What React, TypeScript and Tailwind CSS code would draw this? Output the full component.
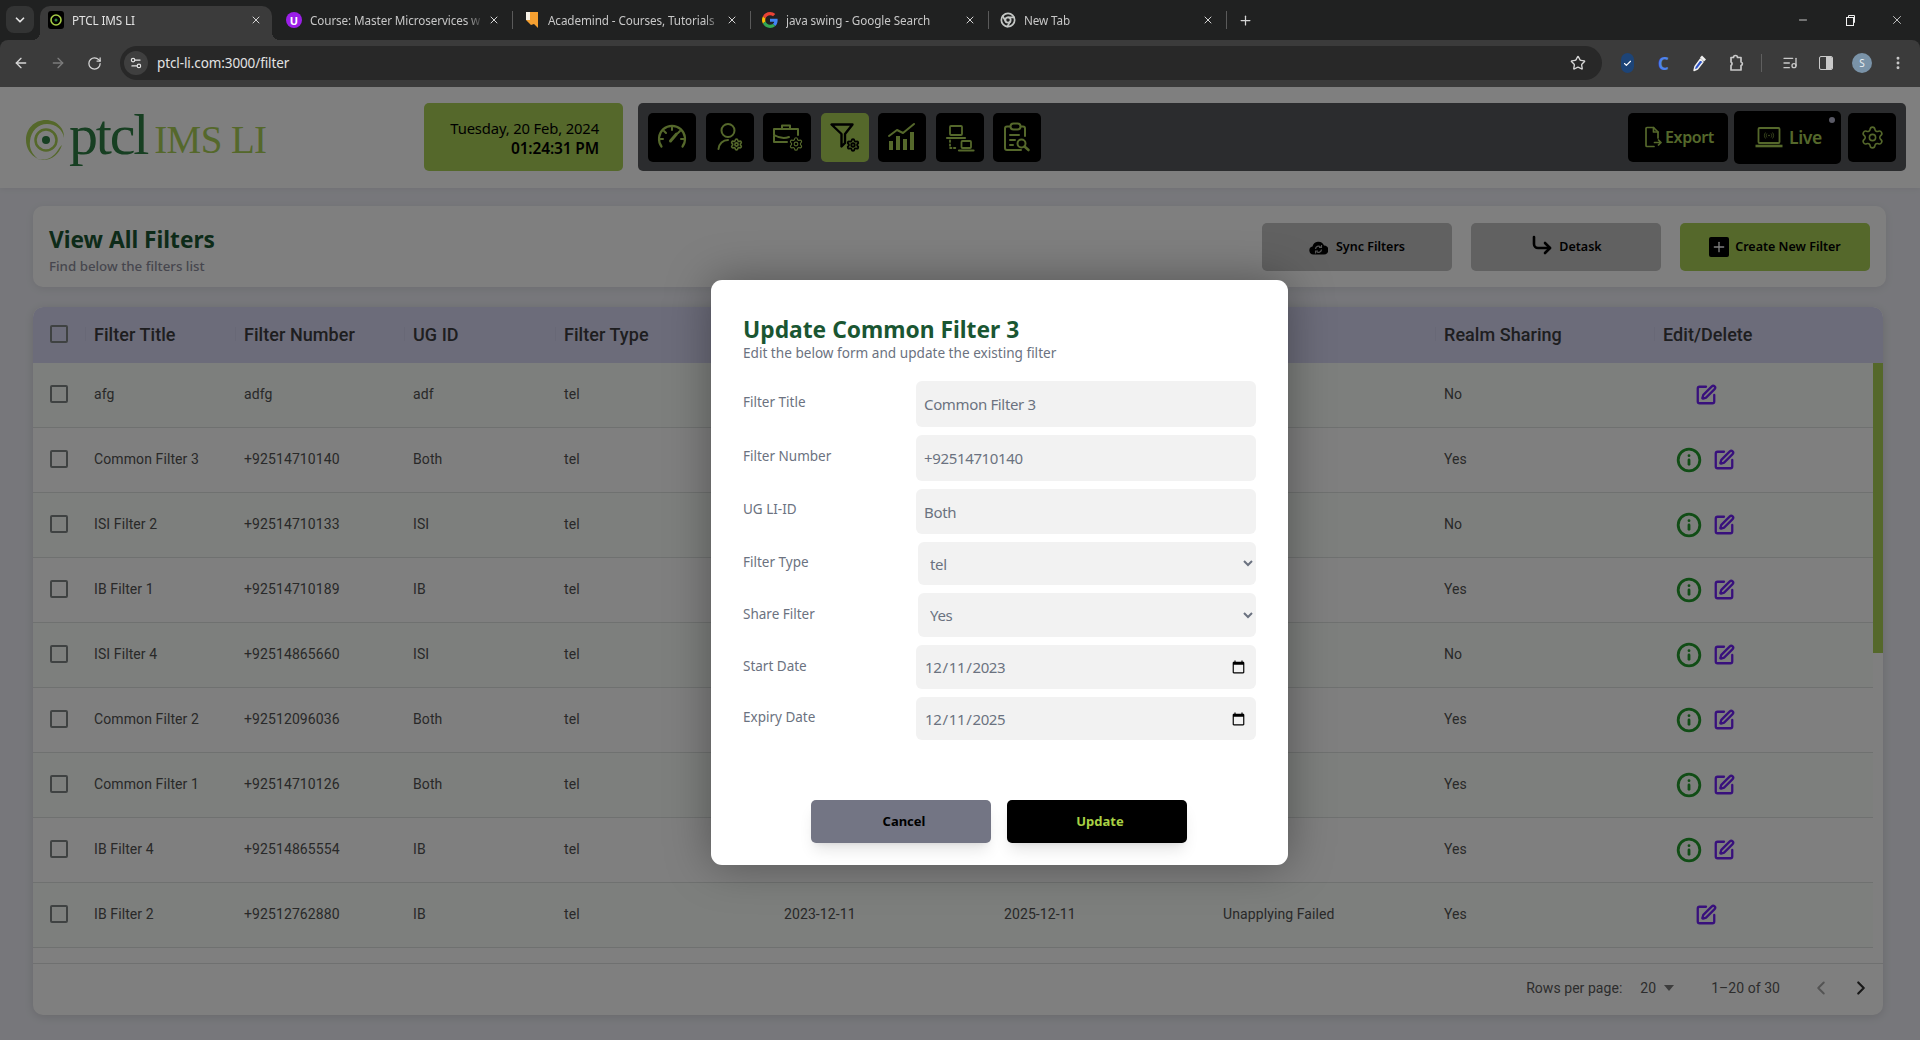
import React from "react";
import {
  ArrowLeft, ArrowRight, RotateCw, Settings2, Star, X, Plus, Minus, ChevronDown, ChevronLeft, ChevronRight,
  Chrome, ListMusic, EllipsisVertical, Check, Settings, CornerDownRight, SquarePen, Info,
} from "lucide-react";

const rows = [
  { t: "afg", n: "adfg", u: "adf", r: "No", info: false, s: "2023-12-11", e: "2025-12-11", st: "Applied" },
  { t: "Common Filter 3", n: "+92514710140", u: "Both", r: "Yes", info: true, s: "2023-12-11", e: "2025-12-11", st: "Applied" },
  { t: "ISI Filter 2", n: "+92514710133", u: "ISI", r: "No", info: true, s: "2023-12-11", e: "2025-12-11", st: "Applied" },
  { t: "IB Filter 1", n: "+92514710189", u: "IB", r: "Yes", info: true, s: "2023-12-11", e: "2025-12-11", st: "Applied" },
  { t: "ISI Filter 4", n: "+92514865660", u: "ISI", r: "No", info: true, s: "2023-12-11", e: "2025-12-11", st: "Applied" },
  { t: "Common Filter 2", n: "+92512096036", u: "Both", r: "Yes", info: true, s: "2023-12-11", e: "2025-12-11", st: "Applied" },
  { t: "Common Filter 1", n: "+92514710126", u: "Both", r: "Yes", info: true, s: "2023-12-11", e: "2025-12-11", st: "Applied" },
  { t: "IB Filter 4", n: "+92514865554", u: "IB", r: "Yes", info: true, s: "2023-12-11", e: "2025-12-11", st: "Applied" },
  { t: "IB Filter 2", n: "+92512762880", u: "IB", r: "Yes", info: false, s: "2023-12-11", e: "2025-12-11", st: "Unapplying Failed" },
];

const cols = "grid grid-cols-[61px_150px_169px_151px_220px_220px_219px_221px_219px_210px]";

function Fav({ kind }: { kind: string }) {
  if (kind === "ptcl")
    return (
      <svg width="16" height="18" viewBox="0 0 16 18">
        <rect width="16" height="18" rx="3" fill="#000" />
        <circle cx="8" cy="9" r="5" fill="none" stroke="#a6cc45" strokeWidth="1.6" />
        <circle cx="8" cy="9" r="1.5" fill="#2f8a3c" />
      </svg>
    );
  if (kind === "udemy")
    return (
      <span className="flex h-4 w-4 items-center justify-center rounded-full bg-[#9b1fe8] text-[11px] font-bold leading-none text-white">U</span>
    );
  if (kind === "aca")
    return (
      <svg width="14" height="18" viewBox="0 0 14 18">
        <path d="M1 1h12v16l-4-4-3 1-5-5z" fill="#f5a031" />
        <path d="M1 1h4v8H1z" fill="#f7f1e6" />
      </svg>
    );
  if (kind === "g")
    return (
      <svg width="16" height="16" viewBox="0 0 48 48">
        <path fill="#EA4335" d="M24 9.5c3.5 0 6.6 1.2 9.1 3.6l6.8-6.8C35.8 2.5 30.4 0 24 0 14.6 0 6.5 5.4 2.6 13.2l7.9 6.2C12.4 13.7 17.7 9.5 24 9.5z" />
        <path fill="#4285F4" d="M46.9 24.5c0-1.6-.1-3.100-.4-4.500H24v9h12.900c-.6 3-2.200 5.500-4.800 7.200l7.700 6c4.500-4.200 7.100-10.300 7.100-17.700z" />
        <path fill="#FBBC05" d="M10.500 28.600c-.5-1.400-.8-3-.8-4.600s.3-3.200.8-4.600l-7.900-6.200C.9 16.500 0 20.100 0 24s.9 7.500 2.600 10.800z" />
        <path fill="#34A853" d="M24 48c6.500 0 11.900-2.100 15.900-5.800l-7.700-6c-2.200 1.500-5 2.300-8.200 2.300-6.300 0-11.600-4.200-13.500-9.900l-7.900 6.200C6.500 42.600 14.600 48 24 48z" />
      </svg>
    );
  return <Chrome size={16} color="#c4c7c5" strokeWidth={2.6} />;
}

function Tab({ kind, title, active, sep }: { kind: string; title: string; active?: boolean; sep?: boolean }) {
  return (
    <div className={`relative flex h-[34px] shrink-0 items-center pb-[6px] pl-2 ${active ? "mr-[6px] w-[232px] rounded-t-[10px] bg-[#3b3b3b]" : "w-[238px]"}`}>
      {active && <span className="absolute bottom-0 left-[-8px] h-2 w-2 bg-[radial-gradient(circle_at_0_0,transparent_8px,#3b3b3b_8px)]" />}
      {active && <span className="absolute bottom-0 right-[-8px] h-2 w-2 bg-[radial-gradient(circle_at_100%_0,transparent_8px,#3b3b3b_8px)]" />}
      <span className="flex w-4 shrink-0 items-center justify-center"><Fav kind={kind} /></span>
      <span
        className={`ml-2 w-[174px] shrink-0 overflow-hidden whitespace-nowrap text-[11.7px] leading-4 tracking-[-0.1px] ${active ? "text-[#e3e3e3]" : "text-[#c7c7c7]"}`}
        style={{ maskImage: "linear-gradient(to right,#000 90%,transparent)" }}
      >
        {title}
      </span>
      <X size={12} strokeWidth={2} color="#d5d5d5" className="ml-[4px] shrink-0" />
      {sep && <span className="ml-auto mr-[3px] h-[18px] w-px bg-[#5a5a5a]" />}
    </div>
  );
}

function Chromebar() {
  return (
    <div className="shrink-0 bg-[#202121]">
      <div className="flex h-10 items-end pl-[6px]">
        <div className="mb-[7px] mr-[6px] flex h-[27px] w-[28px] items-center justify-center rounded-lg bg-[#333434]">
          <ChevronDown size={14} strokeWidth={3} color="#e3e3e3" />
        </div>
        <Tab kind="ptcl" title="PTCL IMS LI" active />
        <Tab kind="udemy" title="Course: Master Microservices w" sep />
        <Tab kind="aca" title="Academind - Courses, Tutorials" sep />
        <Tab kind="g" title="java swing - Google Search" sep />
        <Tab kind="new" title="New Tab" sep />
        <div className="flex h-[34px] items-center pb-[6px] pl-[8px]"><Plus size={15} strokeWidth={2} color="#d5d5d5" /></div>
        <div className="ml-auto flex h-10 items-center pr-[16px]">
          <Minus size={12} strokeWidth={1.6} color="#f0f0f0" className="mr-[36px]" />
          <svg width="11" height="11" viewBox="0 0 11 11" fill="none" stroke="#f0f0f0" className="mr-[34px]">
            <rect x="1.500" y="2.500" width="7" height="8" />
            <path d="M3.500 2.500V.5h6v7H8.500" />
          </svg>
          <X size={14} strokeWidth={1.3} color="#f0f0f0" />
        </div>
      </div>
      <div className="flex h-[47px] items-center rounded-t-[8px] bg-[#3b3b3b] pb-[1px] pl-[13px]">
        <ArrowLeft size={16} strokeWidth={2} color="#d6d6d6" />
        <ArrowRight size={16} strokeWidth={2} color="#7c7c7c" className="ml-[21px]" />
        <RotateCw size={15} strokeWidth={2} color="#d6d6d6" className="ml-[21px]" />
        <div className="ml-[18px] flex h-[34px] w-[1482px] items-center rounded-full bg-[#282828] pl-1">
          <span className="flex h-6 w-6 items-center justify-center rounded-full bg-[#3f3f3f]">
            <Settings2 size={14} strokeWidth={2} color="#e3e3e3" />
          </span>
          <span className="ml-[9px] font-['Noto_Sans',sans-serif] text-[13.5px] tracking-[-0.1px] text-[#e3e3e3]">ptcl-li.com:3000/filter</span>
          <Star size={16} strokeWidth={2} color="#d6d6d6" className="ml-auto mr-[16px]" />
        </div>
        <span className="ml-[19px] flex h-[20px] w-[13px] items-center justify-center rounded-full bg-[#1d4477]"><Check size={9} strokeWidth={3} color="#fff" /></span>
        <span className="ml-[24px] w-[13px] font-['Noto_Sans',sans-serif] text-[17px] font-bold leading-none text-[#4d82ec]">C</span>
        <svg width="16" height="18" viewBox="0 0 16 18" className="ml-[21px]">
          <path d="M10 1.500l4 4-2 2-4-4z" fill="#f0f0f0" />
          <path d="M8.500 5L3 12.500 2 16.500l3.500-1.500L11 8z" fill="#2f55c8" stroke="#f0f0f0" strokeWidth="1.400" strokeLinejoin="round" />
        </svg>
        <svg width="16" height="18" viewBox="0 0 16 18" fill="none" stroke="#c9c9c9" strokeWidth="1.700" strokeLinejoin="round" className="ml-[20px]">
          <path d="M3 3.500h2.500a2 2 0 0 1 4 0H13v4.500a1.800 1.800 0 0 1 0 3.500V16H3v-4.500a2 2 0 0 0 0-3.500z" />
        </svg>
        <span className="ml-[17px] h-[18px] w-px bg-[#5f5f5f]" />
        <ListMusic size={16} strokeWidth={2} color="#c9c9c9" className="ml-[20px]" />
        <span className="ml-[21px] flex h-[14px] w-[14px] overflow-hidden rounded-[2px] border-[1.5px] border-[#c9c9c9]"><span className="w-1/2" /><span className="w-1/2 bg-[#c9c9c9]" /></span>
        <span className="ml-[19px] flex h-5 w-5 items-center justify-center rounded-full bg-[#7a93a8] font-['Noto_Sans',sans-serif] text-[10px] text-[#e8eef2]">S</span>
        <EllipsisVertical size={16} strokeWidth={2.4} color="#c9c9c9" className="ml-[18px]" />
      </div>
    </div>
  );
}

const G = ({ x, y, s = 13, w = 3 }: { x: number; y: number; s?: number; w?: number }) => (
  <Settings x={x} y={y} size={s} strokeWidth={w} color="currentColor" />
);

function NavIcon({ i }: { i: number }) {
  const p = { width: 32, height: 32, viewBox: "0 0 32 32", fill: "none", stroke: "currentColor", strokeWidth: 2, strokeLinecap: "round" as const, strokeLinejoin: "round" as const };
  if (i === 0)
    return (
      <svg {...p}>
        <path d="M5.500 25.500A13 13 0 1 1 26.500 25.500" strokeWidth="2.200" />
        <path d="M16 6.500v2.500M8 10l2 2M24 10l-2 2M4.500 18h2.500M25 18h2.500" />
        <path d="M14.500 20l6-7" strokeWidth="3" />
      </svg>
    );
  if (i === 1)
    return (
      <svg {...p}>
        <circle cx="14" cy="9.500" r="6.500" />
        <path d="M4.500 28c.5-5.500 4.500-9 9.500-9" />
        <G x={16} y={17} s={13} />
      </svg>
    );
  if (i === 2)
    return (
      <svg {...p}>
        <path d="M3 8h24v6M3 8v13h13M3 14c5 3 11 3.500 15 2" />
        <path d="M11 8V4.500h8V8" />
        <G x={17.500} y={15.500} s={15} w={1.800} />
      </svg>
    );
  if (i === 3)
    return (
      <svg {...p} strokeWidth={2.400}>
        <path d="M2.500 3.500h21L16 13v9l-3.500 3.500V13z" />
        <G x={17} y={17} s={14} w={3.200} />
      </svg>
    );
  if (i === 4)
    return (
      <svg {...p}>
        <path d="M3 15l8-6 6 3 11-9" />
        <path d="M5 29V20M12 29V15M19 29V18M26 29V11" strokeWidth="4" strokeLinecap="butt" />
      </svg>
    );
  if (i === 5)
    return (
      <svg {...p} strokeWidth={1.800}>
        <rect x="6" y="5" width="12" height="9" rx="1" />
        <path d="M3 17h18" strokeWidth="2.200" />
        <rect x="17.500" y="20" width="9.500" height="7" rx="1" />
        <path d="M15 29.500h14.500" strokeWidth="2.200" />
        <path d="M6 19.500V27h7" strokeDasharray="1.400 2.400" />
      </svg>
    );
  return (
    <svg {...p}>
      <path d="M9 5.500H6a2 2 0 0 0-2 2V27a2 2 0 0 0 2 2h14M20 5.500h2a2 2 0 0 1 2 2V15" />
      <rect x="9.500" y="2.500" width="10" height="6" rx="3" />
      <path d="M9 14h9M9 19h5M9 24h3" />
      <circle cx="20.500" cy="22.500" r="4" />
      <path d="M23.500 25.500l4 3.500" strokeWidth="2.600" />
    </svg>
  );
}

function ExportIcon() {
  return (
    <svg width="17" height="22" viewBox="0 0 17 22" fill="none" stroke="currentColor" strokeWidth="1.700" strokeLinejoin="round" strokeLinecap="round">
      <path d="M13 12V6L8.500 1.500H2a1 1 0 0 0-1 1V19.500a1 1 0 0 0 1 1H9" />
      <path d="M8.500 1.500V6H13" />
      <path d="M9.500 16.500H16M13.500 14l2.500 2.500-2.500 2.500" />
    </svg>
  );
}

function LiveIcon() {
  return (
    <svg width="28" height="24" viewBox="0 0 28 24" fill="none" stroke="currentColor" strokeWidth="1.800">
      <rect x="3.500" y="3" width="21" height="15" rx="1" />
      <path d="M.5 21h27" strokeWidth="2.600" />
      <circle cx="14" cy="10.500" r=".7" fill="currentColor" stroke="none" />
      <path d="M12 8.500c-1 1.200-1 2.800 0 4M16 8.500c1 1.200 1 2.800 0 4M10.500 7.500c-1.500 2-1.500 4 0 6M17.500 7.500c1.500 2 1.500 4 0 6" strokeWidth=".6" />
    </svg>
  );
}

function CloudSync() {
  return (
    <svg width="19" height="18" viewBox="0 0 19 18">
      <path d="M4.500 16.500A4 4 0 0 1 3.500 8.600 6 6 0 0 1 15 7.500a4.500 4.500 0 0 1 0 9z" fill="#000" />
      <path d="M6.500 11a3 3 0 0 1 5-2M12.500 11.500a3 3 0 0 1-5 2" fill="none" stroke="#aaa" strokeWidth="1.300" />
      <path d="M12.500 7v2.500H10M6.500 15.500V13H9" fill="none" stroke="#aaa" strokeWidth="1.100" />
    </svg>
  );
}

function Logo() {
  return (
    <div className="flex w-[399px] items-start pl-[25px]">
      <svg width="41" height="42" viewBox="0 0 41 42" fill="none" className="mt-[16px] shrink-0">
        <path d="M21 1C9 1 1 10 1 21c0 8 4 15 12 19-6-5-9-11-8-18C6 12 13 5 22 5c9 0 16 6 17 14 1-9-7-18-18-18z" fill="#aad056" />
        <path d="M37 26c-3 9-10 15-19 15-3 0-5-1-5-1 8 2 15-1 20-9 1-2 2-3 4-5z" fill="#aad056" />
        <circle cx="21" cy="21" r="10.500" stroke="#aad056" strokeWidth="2.500" />
        <circle cx="21" cy="21" r="4" fill="#2e7e44" />
      </svg>
      <span className="ml-[3px] mt-[3px] font-['Liberation_Serif',serif] text-[58px] leading-none tracking-[-2.200px] text-[#2e7e44]">ptcl</span>
      <span className="ml-[7px] mt-[17px] font-['Liberation_Serif',serif] text-[39px] leading-none tracking-[-0.600px] text-[#aad056]">IMS LI</span>
    </div>
  );
}

function Field({ label, cls = "-translate-y-[2px]", children }: { label: string; cls?: string; children: React.ReactNode }) {
  return (
    <div className="mb-2 flex items-center">
      <label className={`w-[173px] shrink-0 text-[13.500px] leading-5 text-[#6b7280] ${cls}`}>{label}</label>
      {children}
    </div>
  );
}

const inputCls = "w-[340px] rounded-[6px] bg-[#f2f2f2] pl-2 text-[15px] tracking-[-0.35px] text-[#6b7280] outline-none";
const selectCls = "ml-[2px] w-[338px] rounded-[6px] bg-[#f2f2f2] pl-[8px] text-[15px] tracking-[-0.35px] text-[#6b7280] outline-none";

function Modal() {
  return (
    <div className="absolute left-[711px] top-[193px] h-[585px] w-[577px] rounded-[11px] bg-white px-8 pt-[34px] font-['Noto_Sans',sans-serif] shadow-[0_0_45px_rgba(0,0,0,0.35)]">
      <h2 className="text-[22.800px] font-bold leading-[31px] text-[#1a5632]">Update Common Filter 3</h2>
      <p className="text-[13.600px] leading-4 text-[#6b7280]">Edit the below form and update the existing filter</p>
      <div className="mt-5">
        <Field label="Filter Title"><input readOnly value="Common Filter 3" className={`${inputCls} h-[46px]`} /></Field>
        <Field label="Filter Number"><input readOnly value="+92514710140" className={`${inputCls} h-[46px]`} /></Field>
        <Field label="UG LI-ID" cls="-translate-y-[3px]"><input readOnly value="Both" className={`${inputCls} h-[45px]`} /></Field>
        <Field label="Filter Type">
          <select value="tel" onChange={() => {}} className={`${selectCls} h-[43px]`}><option>tel</option></select>
        </Field>
        <Field label="Share Filter" cls="-translate-y-[1px]">
          <select value="Yes" onChange={() => {}} className={`${selectCls} h-[44px]`}><option>Yes</option><option>No</option></select>
        </Field>
        <Field label="Start Date" cls="-translate-y-[1px]"><input type="date" onChange={() => {}} value="2023-12-11" className={`${inputCls} h-[44px] pr-2 pt-px`} /></Field>
        <Field label="Expiry Date"><input type="date" onChange={() => {}} value="2025-12-11" className={`${inputCls} h-[43px] pr-2 pt-px`} /></Field>
      </div>
      <div className="ml-[68px] mt-[60px] flex gap-4">
        <button className="h-[43px] w-[180px] rounded-[5px] bg-[#737584] pl-[6px] text-[13px] font-bold text-black shadow-lg">Cancel</button>
        <button className="h-[43px] w-[180px] rounded-[5px] bg-black pl-[6px] text-[13px] font-bold text-[#a8d044] shadow-lg">Update</button>
      </div>
    </div>
  );
}

function Checkbox() {
  return <span className="ml-[17px] block h-[18px] w-[18px] rounded-[2px] border-2 border-[#7f8585]" />;
}

function Header() {
  const titles = ["Filter Title", "Filter Number", "UG ID", "Filter Type", "Start Date", "Expiry Date", "Status", "Realm Sharing", "Edit/Delete"];
  return (
    <div className={`${cols} h-14 items-center rounded-t-[10px] bg-[#d8d8f4] pb-[2px] text-[18px] font-medium tracking-[0.05px] text-[#3c3c40]`}>
      <Checkbox />
      {titles.map((t) => (
        <div key={t} className="relative flex items-center before:absolute before:left-[-9px] before:h-[14px] before:w-px before:bg-[#d0d0ec]">{t}</div>
      ))}
    </div>
  );
}

function Table() {
  return (
    <div className="mt-5 h-[708px] w-[1850px] overflow-hidden rounded-[10px] bg-white font-['Roboto',sans-serif] shadow-[0_2px_10px_rgba(0,0,0,0.12)]">
      <Header />
      <div className="flex h-[600px]">
        <div className="w-[1840px]">
          {rows.map((r, i) => (
            <div key={r.t} className={`${cols} h-[65px] items-center border-b border-[#dfe3e1] pb-[2px] text-[14px] tracking-[0.1px] text-[#525252] ${i % 2 === 0 ? "bg-[#fafffa]" : "bg-white"}`}>
              <Checkbox />
              <div>{r.t}</div>
              <div>{r.n}</div>
              <div>{r.u}</div>
              <div>tel</div>
              <div>{r.s}</div>
              <div>{r.e}</div>
              <div>{r.st}</div>
              <div>{r.r}</div>
              <div className={`flex translate-y-[1px] items-center ${r.info ? "gap-[13px] pl-[15px]" : "pl-[32px]"}`}>
                {r.info && <Info size={26} strokeWidth={2.600} color="#229a2c" className="-m-[2px]" />}
                <SquarePen size={22} strokeWidth={2.500} color="#7020f8" />
              </div>
            </div>
          ))}
        </div>
        <div className="w-[10px]"><div className="h-[290px] bg-[#aad056]" /></div>
      </div>
      <div className="flex h-[52px] items-center justify-end border-t border-[#dfe0e0] pb-[3px] pr-[11px] text-[14px] tracking-[0.05px] text-[#5a5a5a]">
        <span>Rows per page:</span>
        <span className="ml-[18px]">20</span>
        <svg width="12" height="6" viewBox="0 0 12 6" className="ml-[7px]"><path d="M1 0h10L6 6z" fill="#7a7a7a" /></svg>
        <span className="ml-[36px]">1–20 of 30</span>
        <ChevronLeft size={22} strokeWidth={2.200} color="#a8a8a8" className="ml-[30px]" />
        <ChevronRight size={22} strokeWidth={2.400} color="#333" className="ml-[18px]" />
      </div>
    </div>
  );
}

export default function App() {
  return (
    <div className="flex h-[1040px] w-[1920px] flex-col overflow-hidden">
      <Chromebar />
      <div className="relative flex-1 overflow-hidden bg-[#eeeff6] font-['Noto_Sans',sans-serif]">
        <header className="flex h-[101px] items-start bg-white pt-4 shadow-[0_1px_6px_rgba(0,0,0,0.06)]">
          <Logo />
          <div className="ml-[25px] flex h-[68px] w-[199px] flex-col items-end justify-center rounded-[5px] bg-[#aad056] pr-[24px] pt-[2px] text-black">
            <span className="text-[14.800px] leading-5 tracking-[-0.15px]">Tuesday, 20 Feb, 2024</span>
            <span className="text-[15.500px] font-semibold leading-5 tracking-[-0.15px]">01:24:31 PM</span>
          </div>
          <div className="ml-[15px] flex h-[68px] w-[1268px] items-center rounded-[5px] bg-[#57585c] px-[10px]">
            <div className="flex gap-[9.500px]">
              {[0, 1, 2, 3, 4, 5, 6].map((i) => (
                <div key={i} className={`flex h-[49px] w-[48px] items-center justify-center rounded-[5px] ${i === 3 ? "bg-[#aad056] text-black" : "bg-black text-[#aad056]"}`}>
                  <NavIcon i={i} />
                </div>
              ))}
            </div>
            <div className="ml-auto flex items-center text-[#aad056]">
              <div className="flex h-[49px] w-[100px] items-center justify-center rounded-[5px] bg-black pl-[3px] text-[16px] font-semibold tracking-[-0.4px]">
                <ExportIcon />
                <span className="ml-[3px]">Export</span>
              </div>
              <div className="relative ml-[6px] flex h-[53px] w-[107px] items-center justify-center rounded-[5px] bg-black pl-[2px] text-[17.500px] font-semibold tracking-[-0.300px]">
                <LiveIcon />
                <span className="ml-[6px]">Live</span>
                <span className="absolute right-[6px] top-[6px] h-[6px] w-[6px] rounded-full bg-[#b4b4cc]" />
              </div>
              <div className="ml-[7px] flex h-[49px] w-[48px] items-center justify-center rounded-[5px] bg-black">
                <Settings size={25} strokeWidth={1.500} />
              </div>
            </div>
          </div>
        </header>
        <main className="pl-[33px]">
          <section className="mt-[18px] flex h-[81px] w-[1853px] items-center justify-between rounded-[10px] bg-white pl-4 pr-4 shadow-[0_2px_8px_rgba(0,0,0,0.08)]">
            <div className="pt-[6px]">
              <h1 className="text-[22.700px] font-bold leading-[29px] text-[#1a5632]">View All Filters</h1>
              <p className="mt-[3px] text-[13.300px] font-medium leading-[18px] text-[#8d8d9c]">Find below the filters list</p>
            </div>
            <div className="flex gap-[19px] pt-px text-[12.500px] font-semibold text-black">
              <button className="flex h-12 w-[190px] items-center justify-center gap-[8px] rounded-[5px] bg-[#c2c2c2]"><CloudSync />Sync Filters</button>
              <button className="flex h-12 w-[190px] items-center justify-center gap-[5px] rounded-[5px] bg-[#c2c2c2]"><CornerDownRight size={24} strokeWidth={2.600} className="-translate-y-[2px]" />Detask</button>
              <button className="flex h-12 w-[190px] items-center justify-center gap-[6px] rounded-[5px] bg-[#aad056]">
                <span className="flex h-[20px] w-[20px] items-center justify-center rounded-[2px] bg-black"><Plus size={16} strokeWidth={2} color="#fff" /></span>Create New Filter
              </button>
            </div>
          </section>
          <Table />
        </main>
        <div className="absolute inset-0 bg-black/50" />
        <Modal />
      </div>
    </div>
  );
}
